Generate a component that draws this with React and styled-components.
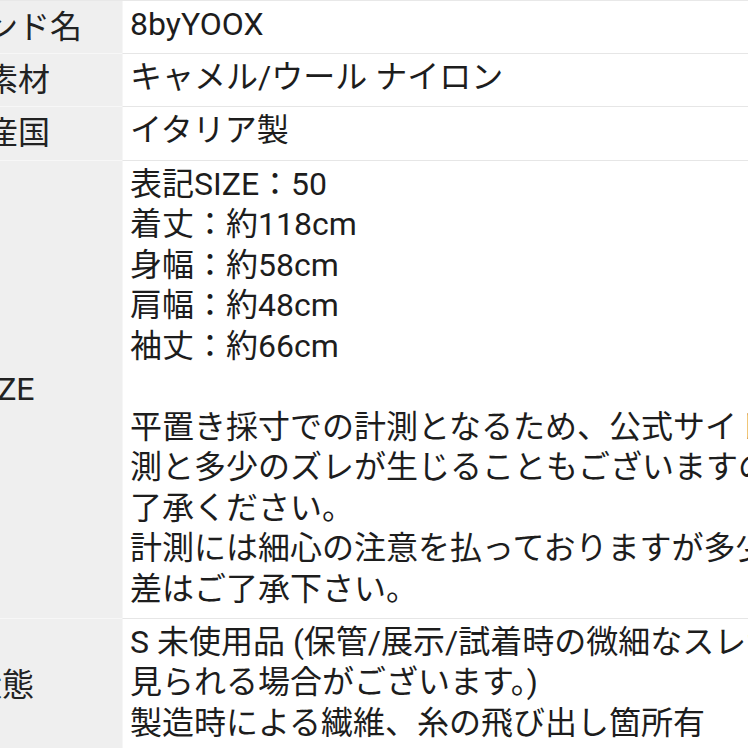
import styled, { createGlobalStyle } from "styled-components";

const GlobalStyle = createGlobalStyle`
  html, body {
    margin: 0;
    padding: 0;
    background: #ffffff;
    overflow: hidden;
  }

  body {
    font-family: Roboto, "Noto Sans CJK JP", sans-serif;
    color: #1d1d1d;
  }
`;

const Page = styled.div`
  width: 748px;
  height: 748px;
  overflow: hidden;
  background: #ffffff;
`;

const Table = styled.div`
  display: flex;
  flex-direction: column;
  width: 1040px;
  margin-left: -118px;
  border-top: 1px solid #e8e8e8;
`;

const Row = styled.div`
  display: grid;
  grid-template-columns: 240px 1fr;
`;

const Label = styled.div`
  display: flex;
  align-items: center;
  justify-content: center;
  background: #efefef;
  border-bottom: 1px solid #f7f7f7;
  font-size: 32px;
  line-height: 40.5px;
  color: #222222;
  white-space: nowrap;
`;

const Value = styled.div`
  padding: 3px 0 8.7px 7px;
  background: #ffffff;
  border-left: 1px solid #f6f6f6;
  border-bottom: 1px solid ${({ $last }) => ($last ? "transparent" : "#e6e6e6")};
  font-size: 32px;
  line-height: 40.5px;
  white-space: nowrap;
`;

const Line = styled.div`
  min-height: 40.5px;
`;

const rows = [
  { label: "ブランド名", lines: ["8byYOOX"] },
  { label: "主素材", lines: ["キャメル/ウール ナイロン"] },
  { label: "原産国", lines: ["イタリア製"] },
  {
    label: "SIZE",
    lines: [
      "表記SIZE：50",
      "着丈：約118cm",
      "身幅：約58cm",
      "肩幅：約48cm",
      "袖丈：約66cm",
      "",
      "平置き採寸での計測となるため、公式サイトの実",
      "測と多少のズレが生じることもございますのでご",
      "了承ください。",
      "計測には細心の注意を払っておりますが多少の誤",
      "差はご了承下さい。",
    ],
  },
  {
    label: "状態",
    lines: [
      "S 未使用品 (保管/展示/試着時の微細なスレが",
      "見られる場合がございます。)",
      "製造時による繊維、糸の飛び出し箇所有",
    ],
  },
];

const App = () => {
  return (
    <Page>
      <GlobalStyle />
      <Table>
        {rows.map((row, i) => (
          <Row key={row.label}>
            <Label>{row.label}</Label>
            <Value $last={i === rows.length - 1}>
              {row.lines.map((line, j) => (
                <Line key={j}>{line}</Line>
              ))}
            </Value>
          </Row>
        ))}
      </Table>
    </Page>
  );
};

export default App;
